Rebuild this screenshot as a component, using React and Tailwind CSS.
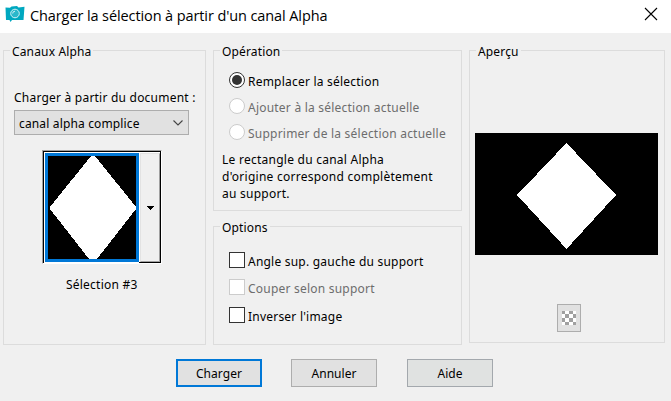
import clsx from "clsx";

function Group({ title, className, children }) {
  return (
    <section className={clsx("border border-[#dcdcdc] flex flex-col", className)}>
      <h2 className="h-[18px] -mt-[9px] ml-[6px] px-[2px] self-start bg-[#f0f0f0] leading-[19px] tracking-[0.15px]">
        {title}
      </h2>
      {children}
    </section>
  );
}

function Radio({ label, checked }) {
  return (
    <label className="flex h-[26px] items-center gap-[3px]">
      <span
        className={clsx(
          "flex h-4 w-4 items-center justify-center rounded-full border bg-white",
          checked ? "border-[#333333]" : "border-[#cccccc]"
        )}
      >
        {checked && <span className="h-[10px] w-[10px] rounded-full bg-[#333333]" />}
      </span>
      <span className={clsx("relative top-px", !checked && "text-[#6d6d6d]")}>{label}</span>
    </label>
  );
}

function Check({ label, disabled }) {
  return (
    <label className="flex h-4 items-center gap-[3px]">
      <span
        className={clsx(
          "h-4 w-4 border bg-white",
          disabled ? "border-[#cccccc]" : "border-[#333333]"
        )}
      />
      <span className={clsx("relative top-px", disabled && "text-[#6d6d6d]")}>{label}</span>
    </label>
  );
}

function CameraIcon() {
  return (
    <svg width="20" height="18" viewBox="0 0 20 18" className="-mt-[3px] shrink-0">
      <path d="M0.500 1.500L5 1.800L6.500 0.500L12 0L13.500 1.500L19.500 0.800L18.500 14L7 14L5.500 16L4.500 14L1 14Z" fill="#00a8c0" />
      <circle cx="10" cy="7.500" r="4.300" fill="#2bb8cb" stroke="#d5f2f6" />
      <path d="M7.700 7.500A2.300 2.300 0 0 1 10 5.200" fill="none" stroke="#d5f2f6" />
    </svg>
  );
}

export default function App() {
  return (
    <div className="h-[401px] w-[671px] overflow-hidden bg-[#f0f0f0] font-['Noto_Sans',sans-serif] text-[12px] leading-[17px] tracking-[0.22px] text-black whitespace-nowrap">
      <header className="flex h-[33px] items-start bg-white pl-[5px] pr-[13px]">
        <div className="pt-[9px]">
          <CameraIcon />
        </div>
        <h1 className="ml-[5px] mt-[7px] text-[14.5px] tracking-[-0.1px] font-['Open_Sans',sans-serif]">
          Charger la sélection à partir d'un canal Alpha
        </h1>
        <svg width="14" height="14" viewBox="0 0 14 14" className="ml-auto mt-[7px]">
          <path d="M1 1L13 13M13 1L1 13" stroke="#000" strokeWidth="1.1" />
        </svg>
      </header>

      <main className="flex items-start gap-[7px] pl-[3px] pt-[17px]">
        <Group title="Canaux Alpha" className="h-[295px] w-[203px]">
          <p className="ml-[10px] mt-[29px]">Charger à partir du document :</p>
          <div className="ml-[10px] mt-[4px] flex h-[25px] w-[175px] items-center justify-between border border-[#adadad] bg-[#e1e1e1] pl-[4px] pr-[5px]">
            <span className="relative top-px tracking-[0.15px]">canal alpha complice</span>
            <svg width="10" height="6" viewBox="0 0 10 6">
              <path d="M0.500 0.500L5 5L9.500 0.500" fill="none" stroke="#444" strokeWidth="1.1" />
            </svg>
          </div>

          <div className="ml-[38px] mt-[15px] h-[114px] w-[120px] border border-b-white border-l-[#a0a0a0] border-r-white border-t-[#a0a0a0]">
            <div className="flex h-[112px] w-[118px] border border-b-0 border-black bg-white pl-px">
              <div className="mt-px h-[109px] w-[94px] border-[3px] border-[#0078d7] bg-black">
                <svg width="88" height="103" viewBox="0 0 88 103" shapeRendering="crispEdges">
                  <path d="M43 0H47L88 51V53L49 103H41L2 53V51Z" fill="#fff" />
                </svg>
              </div>
              <div className="h-[111px] w-[21px] border-b border-black pl-px pt-px">
                <div className="flex h-[109px] w-[20px] items-center justify-center border border-b-[#a0a0a0] border-l-[#e3e3e3] border-r-[#a0a0a0] border-t-[#e3e3e3] bg-[#f0f0f0]">
                  <svg width="7" height="4" viewBox="0 0 7 4" shapeRendering="crispEdges">
                    <path d="M0 0H7V1H6V2H5V3H4V4H3V3H2V2H1V1H0Z" />
                  </svg>
                </div>
              </div>
            </div>
          </div>
          <p className="ml-[62px] mt-[12px]">Sélection #3</p>
        </Group>

        <div className="flex flex-col gap-[15px]">
          <Group title="Opération" className="h-[161px] w-[249px]">
            <div className="ml-[15px] mt-[7px]">
              <Radio label="Remplacer la sélection" checked />
              <Radio label="Ajouter à la sélection actuelle" />
              <Radio label="Supprimer de la sélection actuelle" />
            </div>
            <p className="ml-[8px] mt-[6px] tracking-[0.25px]">
              Le rectangle du canal Alpha
              <br />
              d'origine correspond complètement
              <br />
              au support.
            </p>
          </Group>
          <Group title="Options" className="h-[119px] w-[249px]">
            <div className="ml-[15px] mt-[16px]">
              <Check label="Angle sup. gauche du support" />
              <div className="mb-[12px] mt-[11px]">
                <Check label="Couper selon support" disabled />
              </div>
              <Check label="Inverser l'image" />
            </div>
          </Group>
        </div>

        <Group title="Aperçu" className="h-[293px] w-[196px]">
          <svg width="183" height="122" viewBox="0 0 183 122" className="ml-[5px] mt-[73px] bg-black" shapeRendering="crispEdges">
            <path d="M91.500 10L141 62L91.500 116L42 62Z" fill="#fff" />
          </svg>
          <button className="ml-[87px] mt-[49px] flex h-[28px] w-[24px] items-center justify-center border border-[#adadad] bg-[#e1e1e1]">
            <svg width="14" height="14" viewBox="0 0 14 14" shapeRendering="crispEdges">
              <rect width="14" height="14" fill="#fff" />
              <path d="M0 0H3V3H0ZM7 0H11V3H7ZM3 3H7V7H3ZM11 3H14V7H11ZM0 7H3V11H0ZM7 7H11V11H7ZM3 11H7V14H3ZM11 11H14V14H11Z" fill="#a0a0a0" />
            </svg>
          </button>
        </Group>
      </main>

      <footer className="mt-[14px] flex pl-[176px] tracking-[0.05px]">
        <button className="h-[28px] w-[86px] border-2 border-[#0078d7] bg-[#e1e1e1]">Charger</button>
        <button className="ml-[29px] h-[28px] w-[86px] border border-[#adadad] bg-[#e1e1e1]">Annuler</button>
        <button className="ml-[30px] h-[28px] w-[86px] border border-[#a3a8ad] bg-[#e0e2e1]">Aide</button>
      </footer>
    </div>
  );
}
